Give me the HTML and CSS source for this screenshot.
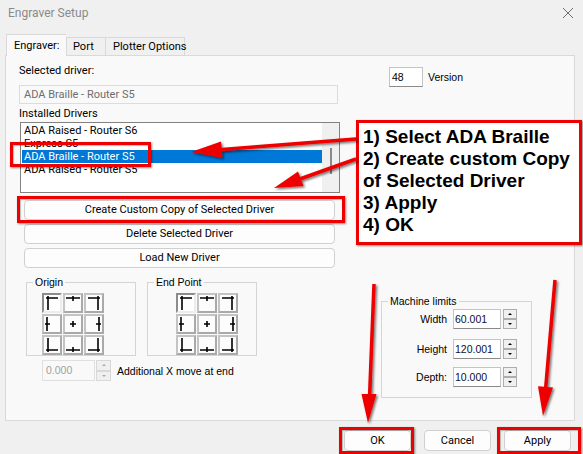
FILE: index.html
```html
<!DOCTYPE html>
<html>
<head>
<meta charset="utf-8">
<title>Engraver Setup</title>
<link rel="stylesheet" href="styles.css">
</head>
<body>
<div class="window">
  <div class="titlebar">
    <span class="title">Engraver Setup</span>
    <svg class="close" width="12" height="12" viewBox="0 0 12 12"><path d="M1 1L11 11M11 1L1 11" stroke="#6e6e6e" stroke-width="1"/></svg>
  </div>
  <div class="tabs">
    <div class="tab active">Engraver:</div>
    <div class="tab port">Port</div>
    <div class="tab plotter">Plotter Options</div>
  </div>
  <div class="panel">
    <div class="left">
      <div class="lbl first">Selected driver:</div>
      <div class="textbox disabled">ADA Braille - Router S5</div>
      <div class="lbl installed">Installed Drivers</div>
      <div class="listbox">
        <div class="items">
          <div class="item">ADA Raised - Router S6</div>
          <div class="item">Express S5</div>
          <div class="item selected">ADA Braille - Router S5</div>
          <div class="item">ADA Raised - Router S5</div>
        </div>
        <div class="vscroll"><div class="thumb"></div></div>
      </div>
      <div class="btn wide b1">Create Custom Copy of Selected Driver</div>
      <div class="btn wide b2">Delete Selected Driver</div>
      <div class="btn wide b3">Load New Driver</div>
      <div class="groups">
        <div class="group origin">
          <span class="glabel">Origin</span>
          <div class="grid">
            <div class="cell pressed"><svg viewBox="0 0 16 16"><path d="M2 3H14M4 1V15"/></svg></div>
            <div class="cell"><svg viewBox="0 0 16 16"><path d="M1 3H15M8 1V6"/></svg></div>
            <div class="cell"><svg viewBox="0 0 16 16"><path d="M2 3H14M12 1V15"/></svg></div>
            <div class="cell"><svg viewBox="0 0 16 16"><path d="M3 1V15M1 8H6"/></svg></div>
            <div class="cell"><svg viewBox="0 0 16 16"><path d="M5 8H11M8 5V11"/></svg></div>
            <div class="cell"><svg viewBox="0 0 16 16"><path d="M13 1V15M10 8H15"/></svg></div>
            <div class="cell"><svg viewBox="0 0 16 16"><path d="M2 13H14M4 1V15"/></svg></div>
            <div class="cell"><svg viewBox="0 0 16 16"><path d="M1 13H15M8 10V15"/></svg></div>
            <div class="cell"><svg viewBox="0 0 16 16"><path d="M2 13H14M12 1V15"/></svg></div>
          </div>
        </div>
        <div class="group endpoint">
          <span class="glabel">End Point</span>
          <div class="grid">
            <div class="cell pressed"><svg viewBox="0 0 16 16"><path d="M2 3H14M4 1V15"/></svg></div>
            <div class="cell"><svg viewBox="0 0 16 16"><path d="M1 3H15M8 1V6"/></svg></div>
            <div class="cell"><svg viewBox="0 0 16 16"><path d="M2 3H14M12 1V15"/></svg></div>
            <div class="cell"><svg viewBox="0 0 16 16"><path d="M3 1V15M1 8H6"/></svg></div>
            <div class="cell"><svg viewBox="0 0 16 16"><path d="M5 8H11M8 5V11"/></svg></div>
            <div class="cell"><svg viewBox="0 0 16 16"><path d="M13 1V15M10 8H15"/></svg></div>
            <div class="cell"><svg viewBox="0 0 16 16"><path d="M2 13H14M4 1V15"/></svg></div>
            <div class="cell"><svg viewBox="0 0 16 16"><path d="M1 13H15M8 10V15"/></svg></div>
            <div class="cell"><svg viewBox="0 0 16 16"><path d="M2 13H14M12 1V15"/></svg></div>
          </div>
        </div>
      </div>
      <div class="addx">
        <div class="numbox disabled">0.000</div>
        <div class="spin disabled"><div class="sbtn"><span class="up"></span></div><div class="sbtn"><span class="down"></span></div></div>
        <span class="ms addlabel">Additional X move at end</span>
      </div>
    </div>
    <div class="right">
      <div class="version">
        <div class="numbox ver">48</div>
        <span class="ms">Version</span>
      </div>
      <div class="group machine">
        <span class="glabel">Machine limits</span>
        <div class="mrow">
          <span class="mlabel">Width</span>
          <div class="numbox mval">60.001</div>
          <div class="spin"><div class="sbtn"><span class="up"></span></div><div class="sbtn"><span class="down"></span></div></div>
        </div>
        <div class="mrow r2">
          <span class="mlabel">Height</span>
          <div class="numbox mval">120.001</div>
          <div class="spin"><div class="sbtn"><span class="up"></span></div><div class="sbtn"><span class="down"></span></div></div>
        </div>
        <div class="mrow r3">
          <span class="mlabel">Depth:</span>
          <div class="numbox mval">10.000</div>
          <div class="spin"><div class="sbtn"><span class="up"></span></div><div class="sbtn"><span class="down"></span></div></div>
        </div>
      </div>
    </div>
  </div>
  <div class="footer">
    <div class="btn dlg">OK</div>
    <div class="btn dlg">Cancel</div>
    <div class="btn dlg">Apply</div>
  </div>

  <div class="mark m-item"></div>
  <div class="mark m-create"></div>
  <div class="mark m-ok"></div>
  <div class="mark m-apply"></div>

  <div class="callout">
    <div>1) Select ADA Braille</div>
    <div>2) Create custom Copy</div>
    <div>of Selected Driver</div>
    <div>3) Apply</div>
    <div>4) OK</div>
  </div>

  <svg class="arrows" width="583" height="454" viewBox="0 0 583 454">
    <defs>
      <filter id="sh" x="-20%" y="-20%" width="140%" height="140%">
        <feDropShadow dx="1.5" dy="1.5" stdDeviation="1.2" flood-color="#000" flood-opacity="0.55"/>
      </filter>
    </defs>
    <g filter="url(#sh)" fill="#ee0000" stroke="#ee0000">
      <line x1="356" y1="139" x2="216" y2="150" stroke-width="3.5"/>
      <polygon points="191,152 221,141.5 222.5,158" stroke="none"/>
      <line x1="356" y1="159" x2="297" y2="180" stroke-width="3.5"/>
      <polygon points="274,188 298,171.5 303.5,186" stroke="none"/>
      <line x1="374" y1="284" x2="369.5" y2="398" stroke-width="3.5"/>
      <polygon points="368,423 376.5,394 361.5,394" stroke="none"/>
      <line x1="555" y1="280" x2="545.5" y2="390" stroke-width="3.5"/>
      <polygon points="543,416 553,387.5 538,386.3" stroke="none"/>
    </g>
  </svg>
</div>
</body>
</html>
```

FILE: styles.css
```css
* { box-sizing: border-box; }
html, body { margin: 0; padding: 0; }
body {
  background: #f0f0f0;
  font-family: Roboto, "Liberation Sans", Arial, sans-serif;
  font-size: 11px;
  color: #000;
}
.window {
  position: relative;
  width: 583px;
  height: 454px;
  overflow: hidden;
  background: #f0f0f0;
}
.titlebar {
  height: 26px;
  display: flex;
  align-items: center;
  justify-content: space-between;
  padding: 0 9px 0 8px;
}
.title { font-size: 12px; color: #8a8a8a; }
.close { display: block; margin-top: -1px; }

.tabs {
  margin-top: 8px;
  height: 21px;
  display: flex;
  align-items: flex-end;
  padding-left: 6px;
  position: relative;
  z-index: 1;
}
.tab {
  height: 18px;
  line-height: 17px;
  padding: 0 6px;
  background: #f0f0f0;
  border: 1px solid #d9d9d9;
  border-bottom: none;
  white-space: nowrap;
}
.tab.active {
  height: 22px;
  line-height: 21px;
  margin-bottom: -1px;
  width: 60px;
  padding: 0 7px;
  background: #f9f9f9;
  border-right: none;
}
.tab.port { width: 40px; }
.tab.plotter { width: 79px; padding-left: 7px; border-left: none; }

.panel {
  margin-left: 5px;
  width: 570px;
  height: 366px;
  border: 1px solid #d9d9d9;
  background: #f9f9f9;
  display: flex;
  align-items: flex-start;
}
.left {
  width: 321px;
  margin-left: 13px;
  display: flex;
  flex-direction: column;
}
.lbl { line-height: 14px; white-space: nowrap; }
.lbl.first { margin-top: 8px; }
.lbl.installed { margin-top: 3px; }
.textbox {
  margin-top: 7px;
  height: 19px;
  width: 319px;
  line-height: 17px;
  padding-left: 4px;
  border: 1px solid #dcdcdc;
}
.textbox.disabled { color: #6d6d6d; background: #f9f9f9; }

.listbox {
  margin-top: 1px;
  margin-left: 1px;
  width: 320px;
  height: 71px;
  border: 1px solid #828282;
  background: #fff;
  display: flex;
}
.items { width: 301px; padding: 1px 0 0 1px; }
.item { height: 13px; line-height: 13px; padding-left: 2px; white-space: nowrap; }
.item.selected { background: #0078d7; color: #fff; }
.vscroll { width: 17px; background: #f0f0f0; display: flex; justify-content: center; }
.thumb { width: 2px; height: 26px; margin-top: 25px; margin-left: 1px; background: #8a8a8a; }

.btn {
  background: #fdfdfd;
  border: 1px solid #d0d0d0;
  border-radius: 4px;
  text-align: center;
  white-space: nowrap;
}
.btn.wide { margin-left: 5px; width: 311px; height: 20px; line-height: 18px; }
.b1 { margin-top: 7px; }
.b2, .b3 { margin-top: 4px; }

.groups { margin-top: 14px; margin-left: 7px; display: flex; gap: 11px; }
.group { position: relative; border: 1px solid #d5d5d5; }
.glabel {
  position: absolute;
  top: -7px;
  left: 6px;
  padding: 0 2px;
  background: #f9f9f9;
  font-family: "Liberation Sans", Arial, sans-serif;
  font-size: 10.5px;
  line-height: 12px;
  white-space: nowrap;
}
.group.origin { width: 110px; height: 74px; padding: 10px 0 0 15px; }
.group.endpoint { width: 110px; height: 74px; padding: 10px 0 0 28px; }
.grid {
  display: grid;
  grid-template-columns: repeat(3, 20px);
  grid-template-rows: repeat(3, 20px);
  gap: 1px;
}
.cell {
  background: #fcfcfc;
  border: 2px solid #a9a9a9;
  border-top-color: #c4c4c4;
  border-left-color: #c4c4c4;
  display: flex;
  align-items: center;
  justify-content: center;
}
.cell.pressed { border-color: #8c8c8c #ececec #ececec #8c8c8c; background: #fff; }
.cell svg { width: 16px; height: 16px; display: block; }
.cell path { stroke: #000; stroke-width: 1.6; fill: none; }

.ms { font-family: "Liberation Sans", Arial, sans-serif; font-size: 10.5px; white-space: nowrap; }

.addx { margin-top: 4px; margin-left: 23px; display: flex; align-items: center; }
.numbox {
  font-family: "Liberation Sans", Arial, sans-serif;
  font-size: 10.5px;
  background: #fff;
  border: 1px solid #c4c4c4;
  border-bottom-color: #8a8a8a;
  white-space: nowrap;
}
.addx .numbox { width: 53px; height: 21px; line-height: 19px; padding-left: 3px; }
.numbox.disabled { color: #a0a0a0; background: #f9f9f9; border-color: #e0e0e0; }
.spin { display: flex; flex-direction: column; margin-left: 2px; width: 14px; }
.sbtn {
  height: 10px;
  background: #f0f0f0;
  border: 1px solid #adadad;
  display: flex;
  align-items: center;
  justify-content: center;
}
.up, .down { width: 0; height: 0; border-left: 2px solid transparent; border-right: 2px solid transparent; }
.up { border-bottom: 2px solid #000; }
.down { border-top: 2px solid #000; }
.spin.disabled { width: 15px; margin-left: 1px; }
.spin.disabled .sbtn { border-color: #d8d8d8; height: 10.5px; }
.spin.disabled .up { border-bottom-color: #a8a8a8; }
.spin.disabled .down { border-top-color: #a8a8a8; }
.addlabel { margin-left: 6px; }

.right { margin-left: 41px; display: flex; flex-direction: column; }
.version { margin-top: 11px; margin-left: 8px; display: flex; align-items: center; }
.numbox.ver { width: 34px; height: 20px; line-height: 18px; padding-left: 2px; margin-right: 5px; }
.group.machine { margin-top: 214px; width: 151px; height: 97px; padding-top: 7px; }
.mrow { display: flex; align-items: center; height: 20px; }
.mrow.r2 { margin-top: 10px; }
.mrow.r3 { margin-top: 8px; }
.mlabel {
  width: 65px;
  text-align: right;
  font-family: "Liberation Sans", Arial, sans-serif;
  font-size: 10.5px;
  white-space: nowrap;
}
.numbox.mval { margin-left: 6px; width: 48px; height: 20px; line-height: 18px; padding-left: 1px; color: #101030; }

.footer {
  margin-top: 9px;
  display: flex;
  justify-content: flex-end;
  gap: 13px;
  padding-right: 12px;
}
.btn.dlg { width: 67px; height: 21px; line-height: 19px; }

.mark {
  position: absolute;
  border: 3px solid #ee0000;
  box-shadow: 1px 1px 2px rgba(0,0,0,0.45), inset 1px 1px 1px rgba(0,0,0,0.25);
}
.m-item { left: 10px; top: 142px; width: 141px; height: 25px; }
.m-create { left: 17px; top: 196px; width: 328px; height: 27px; }
.m-ok { left: 339px; top: 427px; width: 75px; height: 27px; }
.m-apply { left: 497px; top: 427px; width: 84px; height: 27px; }

.callout {
  position: absolute;
  left: 356px;
  top: 120px;
  width: 226px;
  height: 125px;
  background: #fff;
  border: 3px solid #ee0000;
  box-shadow: 1px 1px 2px rgba(0,0,0,0.45);
  padding: 3px 0 0 4px;
  font-family: "Liberation Sans", Arial, sans-serif;
  font-weight: bold;
  font-size: 19px;
  line-height: 22px;
  white-space: nowrap;
}
.arrows { position: absolute; left: 0; top: 0; pointer-events: none; }
```
